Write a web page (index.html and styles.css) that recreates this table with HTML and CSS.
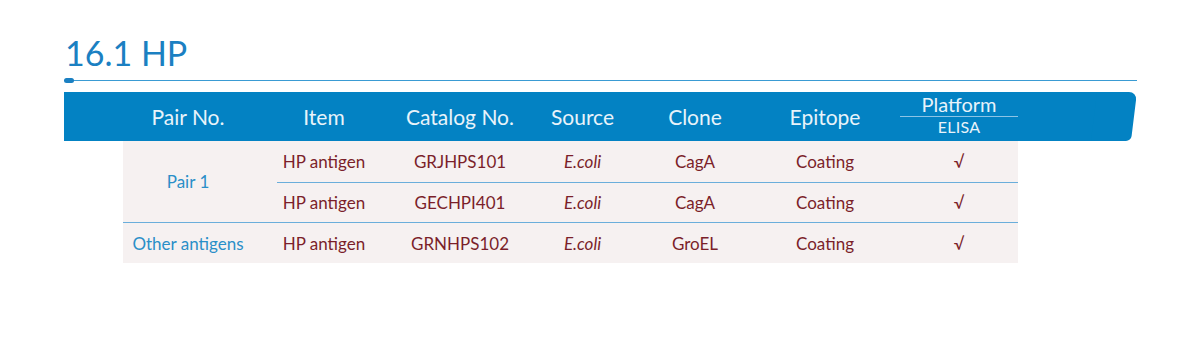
FILE: index.html
```html
<!DOCTYPE html>
<html>
<head>
<meta charset="utf-8">
<link rel="stylesheet" href="styles.css">
</head>
<body>
<div class="page">
  <h1 class="title">16.1 HP</h1>
  <div class="rule"><span class="dot"></span></div>
  <div class="thead">
    <div class="hgrid">
      <div class="hc">Pair No.</div>
      <div class="hc">Item</div>
      <div class="hc">Catalog No.</div>
      <div class="hc">Source</div>
      <div class="hc">Clone</div>
      <div class="hc">Epitope</div>
      <div class="hc plat"><span class="plat-top">Platform</span><span class="plat-sub">ELISA</span></div>
    </div>
  </div>
  <div class="tbody">
    <div class="c pair span2">Pair 1</div>
    <div class="c">HP antigen</div>
    <div class="c">GRJHPS101</div>
    <div class="c"><i>E.coli</i></div>
    <div class="c">CagA</div>
    <div class="c">Coating</div>
    <div class="c">√</div>
    <div class="subline"></div>
    <div class="c">HP antigen</div>
    <div class="c">GECHPI401</div>
    <div class="c"><i>E.coli</i></div>
    <div class="c">CagA</div>
    <div class="c">Coating</div>
    <div class="c">√</div>
    <div class="fullline"></div>
    <div class="c pair">Other antigens</div>
    <div class="c">HP antigen</div>
    <div class="c">GRNHPS102</div>
    <div class="c"><i>E.coli</i></div>
    <div class="c">GroEL</div>
    <div class="c">Coating</div>
    <div class="c">√</div>
  </div>
</div>
</body>
</html>
```

FILE: styles.css
```css
html, body {
  margin: 0;
  padding: 0;
  background: #ffffff;
}
body {
  font-family: "Lato", "Noto Sans", "Liberation Sans", sans-serif;
}
.page {
  padding: 33px 0 0 64px;
  width: 1073px;
}
.title {
  margin: 0 0 0 1px;
  font-weight: 400;
  font-size: 34px;
  line-height: 40px;
  color: #1b80c2;
  letter-spacing: 0;
}
.rule {
  position: relative;
  margin-top: 7px;
  height: 1px;
  background: #3a9bd3;
}
.dot {
  position: absolute;
  left: 0;
  top: -2px;
  width: 10px;
  height: 5px;
  border-radius: 3px;
  background: #1b80c2;
}
.thead {
  position: relative;
  margin-top: 11px;
  margin-right: 27px;
  height: 49px;
  background: #0382c3;
}
.thead::after {
  content: "";
  position: absolute;
  top: 0;
  right: -24px;
  width: 40px;
  height: 49px;
  background: #0382c3;
  border-radius: 0 8px 5px 0;
  transform: skewX(-7deg);
}
.hgrid {
  position: relative;
  z-index: 1;
  display: grid;
  grid-template-columns: 130px 142px 130px 115px 110px 150px 118px;
  margin-left: 59px;
  height: 49px;
  align-items: center;
}
.hc {
  text-align: center;
  color: #e8f3fa;
  font-size: 21px;
}
.plat {
  display: flex;
  flex-direction: column;
  align-items: center;
  padding-bottom: 3px;
}
.plat-top {
  width: 100%;
  font-size: 20px;
  line-height: 20px;
  border-bottom: 1px solid #8cc4e6;
  padding-bottom: 2px;
}
.plat-sub {
  font-size: 16px;
  line-height: 18px;
  padding-top: 1px;
  letter-spacing: 0.3px;
}
.tbody {
  margin-left: 59px;
  width: 895px;
  display: grid;
  grid-template-columns: 130px 142px 130px 115px 110px 150px 118px;
  grid-template-rows: 41px 1px 39px 1px 40px;
  background: #f6f1f1;
}
.c {
  display: flex;
  align-items: center;
  justify-content: center;
  font-size: 17px;
  color: #7b1f2a;
}
.c i {
  font-style: italic;
}
.pair {
  color: #2a8fc8;
  font-size: 17px;
}
.span2 {
  grid-row: 1 / 4;
  grid-column: 1;
}
.subline {
  grid-column: 2 / -1;
  margin-left: 24px;
  background: #6aaedb;
}
.fullline {
  grid-column: 1 / -1;
  background: #6aaedb;
}
```
